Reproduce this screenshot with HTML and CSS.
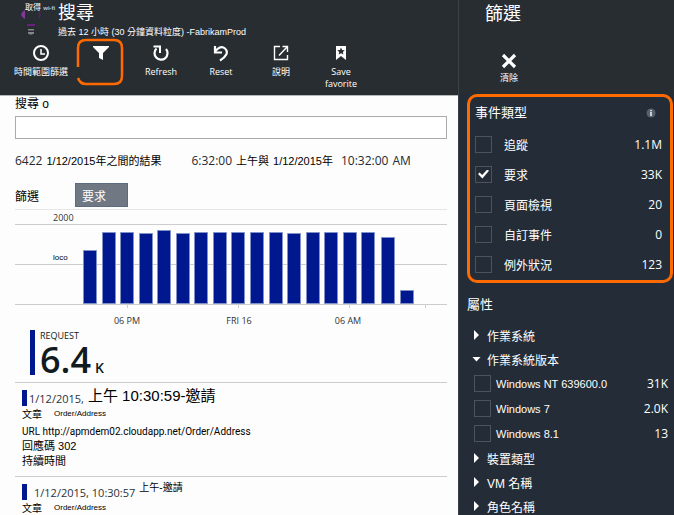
FILE: index.html
```html
<!DOCTYPE html>
<html lang="zh-Hant">
<head>
<meta charset="utf-8">
<title>搜尋</title>
<link rel="stylesheet" href="styles.css">
</head>
<body>
<div class="app">
  <main class="search">
    <header class="search-head">
      <div class="brand">
        <div class="logo">
          <svg class="bulb" width="22" height="32" viewBox="0 0 22 32" aria-hidden="true">
            <path d="M5 7C0 10 0 13 5 16Z" fill="#803998"/>
            <path d="M19 9Q21 12 19 15" stroke="#4b2563" stroke-width="1.500" fill="none"/>
            <path d="M7 21h8v2H7z" fill="#68217a"/>
            <path d="M8 26h6v1.500H8zM8 29h6v1.500l-2 1h-2l-2-1z" fill="#85888a"/>
          </svg>
          <span class="logo-text">取得 <b>wi-fi</b></span>
        </div>
        <div class="heading">
          <h1>搜尋</h1>
          <p>過去 12 小時 (30 分鐘資料粒度) -FabrikamProd</p>
        </div>
      </div>
      <nav class="toolbar">
        <button type="button">
          <svg width="18" height="18" viewBox="0 0 18 18" aria-hidden="true"><circle cx="9" cy="9" r="7" fill="none" stroke="#fff" stroke-width="2"/><path d="M9 5v5h4" fill="none" stroke="#fff" stroke-width="1.500"/></svg>
          <span>時間範圍篩選</span>
        </button>
        <button type="button" class="picked" aria-label="篩選">
          <svg width="18" height="18" viewBox="0 0 18 18" aria-hidden="true"><path d="M1 2h16v1l-6 6v7l-4-2V9L1 3z" fill="#fff"/></svg>
          <svg class="outline" width="48" height="48" viewBox="0 0 48 48" aria-hidden="true"><path d="M2 29V10Q2 2 10 2H38Q46 2 46 10V38Q46 46 38 46H10Q4 46 2 40" fill="none" stroke="#ff6a00" stroke-width="2.500"/></svg>
        </button>
        <button type="button">
          <svg width="18" height="18" viewBox="0 0 18 18" aria-hidden="true"><path d="M4.500 4.500A6.500 6.500 0 1 0 14 5" fill="none" stroke="#fff" stroke-width="2.200"/><path d="M1.500 2.500H8V9" fill="none" stroke="#fff" stroke-width="2"/></svg>
          <span>Refresh</span>
        </button>
        <button type="button">
          <svg width="18" height="18" viewBox="0 0 18 18" aria-hidden="true"><path d="M3 7.500C6 4 10 2 13 4.500C17 8 14 13 8 16.500" fill="none" stroke="#fff" stroke-width="2.200"/><path d="M3 2v6.500h7" fill="none" stroke="#fff" stroke-width="2.200"/></svg>
          <span>Reset</span>
        </button>
        <button type="button">
          <svg width="18" height="18" viewBox="0 0 18 18" aria-hidden="true"><path d="M8 2.500H2.500v13h13V11M7 11.500L15 3M10.500 2.500h5V8" fill="none" stroke="#fff" stroke-width="1.400"/></svg>
          <span>說明</span>
        </button>
        <button type="button">
          <svg width="18" height="18" viewBox="0 0 18 18" aria-hidden="true"><path d="M4 2h10v14l-5-4-5 4z" fill="#fff"/><path d="M9 3.500l1.100 2.500 2.700.2-2 1.800.6 2.600L9 9.200l-2.400 1.400.6-2.600-2-1.800 2.700-.2z" fill="#282d31"/></svg>
          <span>Save<br>favorite</span>
        </button>
      </nav>
    </header>

    <section class="content">
      <label class="query" for="q">搜尋 o</label>
      <input class="query-box" id="q" type="text">
      <p class="range">
        <span class="seg big">6422</span>
        <span class="seg span-from">1/12/2015年之間的結果</span>
        <span class="seg big">6:32:00</span>
        <span class="seg">上午與</span>
        <span class="seg span-to">1/12/2015年</span>
        <span class="seg big">10:32:00</span>
        <span class="seg big">AM</span>
      </p>
      <div class="filters">
        <span>篩選</span>
        <button type="button" class="chip">要求</button>
      </div>
      <svg class="chart" viewBox="0 0 432 120" role="img" aria-label="REQUEST">
        <g fill="none" stroke="#ccc">
          <path stroke="#e6e6e6" d="M0 .5H432"/>
          <path d="M0 15.500H432M0 55.500H432M0 95.500H432M112.500 95v4M223.500 95v4M334.500 95v4M410.500 95v4"/>
        </g>
        <g class="bars">
          <path d="M68.500 41.500h13v53h-13zM87.500 23.500h13v71h-13zM105.500 23.500h13v71h-13zM124.500 24.500h13v70h-13zM142.500 21.500h13v73h-13zM161.500 24.500h13v70h-13zM179.500 23.500h13v71h-13zM198.500 23.500h13v71h-13zM216.500 23.500h13v71h-13zM235.500 23.500h13v71h-13zM254.500 23.500h13v71h-13zM272.500 24.500h13v70h-13zM291.500 23.500h13v71h-13zM309.500 23.500h13v71h-13zM328.500 23.500h13v71h-13zM346.500 23.500h13v71h-13zM366.500 28.500h13v66h-13zM385.500 81.500h13v13h-13z"/>
        </g>
        <g class="axis">
          <text x="38" y="12">2000</text>
          <text class="mid-value" x="38" y="51">loco</text>
          <g text-anchor="middle">
            <text x="112" y="115">06 PM</text>
            <text x="224" y="115">FRI 16</text>
            <text x="333" y="115">06 AM</text>
          </g>
        </g>
      </svg>
      <div class="total">
        <span class="total-name">REQUEST</span>
        <span class="total-value"><span>6.4</span><small>K</small></span>
      </div>
      <article class="hit">
        <h2><span class="date">1/12/2015,</span><span class="time">上午 10:30:59-邀請</span></h2>
        <p class="meta"><span>文章</span><span class="path">Order/Address</span></p>
        <div class="details">
          <p class="url">URL http://apmdem02.cloudapp.net/Order/Address</p>
          <p>回應碼 302</p>
          <p>持續時間</p>
        </div>
      </article>
      <article class="hit compact">
        <h2><span class="date">1/12/2015, 10:30:57</span><span class="time">上午-邀請</span></h2>
        <p class="meta"><span>文章</span><span class="path">Order/Address</span></p>
      </article>
    </section>
  </main>

  <aside class="panel">
    <header class="panel-head">
      <h1>篩選</h1>
      <button type="button" class="clear">
        <svg width="16" height="16" viewBox="0 0 16 16" aria-hidden="true"><path d="M2 2l12 12M14 2L2 14" stroke="#fff" stroke-width="3.200"/></svg>
        <span>清除</span>
      </button>
    </header>
    <section class="types">
      <div class="types-head">
        <h2>事件類型</h2>
        <svg width="10" height="10" viewBox="0 0 10 10" aria-hidden="true"><circle cx="5" cy="5" r="4.500" fill="#56616d"/><path d="M4.300 2h1.400v1.300H4.300zM4.300 4h1.400v4H4.300z" fill="#fff"/></svg>
      </div>
      <label class="option"><input type="checkbox"><span>追蹤</span><b>1.1M</b></label>
      <label class="option"><input type="checkbox" checked><span>要求</span><b>33K</b></label>
      <label class="option"><input type="checkbox"><span>頁面檢視</span><b>20</b></label>
      <label class="option"><input type="checkbox"><span>自訂事件</span><b>0</b></label>
      <label class="option"><input type="checkbox"><span>例外狀況</span><b>123</b></label>
    </section>
    <section class="props">
      <h2>屬性</h2>
      <button type="button" class="group">作業系統</button>
      <button type="button" class="group open">作業系統版本</button>
      <label class="option"><input type="checkbox"><span>Windows NT 639600.0</span><b>31K</b></label>
      <label class="option"><input type="checkbox"><span>Windows 7</span><b>2.0K</b></label>
      <label class="option"><input type="checkbox"><span>Windows 8.1</span><b>13</b></label>
      <button type="button" class="group">裝置類型</button>
      <button type="button" class="group">VM 名稱</button>
      <button type="button" class="group">角色名稱</button>
    </section>
  </aside>
</div>
</body>
</html>
```
FILE: styles.css
```css
* {
  box-sizing: border-box;
}

body {
  margin: 0;
  background: #242d37;
  color: #000;
  font-family: "Liberation Sans", "Noto Sans CJK TC", sans-serif;
  font-size: 12px;
}

h1, h2, p {
  margin: 0;
  font-weight: 400;
}

button {
  padding: 0;
  border: 0;
  background: none;
  color: inherit;
  font: inherit;
}

svg {
  display: block;
}

.app {
  display: grid;
  grid-template-columns: minmax(0, 1fr) 216px;
  height: 100vh;
  overflow: hidden;
}

/* Search column */

.search {
  background: #fdfdfd;
}

.search-head {
  height: 96px;
  background: #282d31;
  border-bottom: 1px solid #b5b7b9;
  color: #fff;
}

.brand {
  display: flex;
  height: 40px;
}

.logo {
  position: relative;
  width: 58px;
  padding: 3px 0 0 20px;
}

.logo-text {
  position: absolute;
  top: 3px;
  left: 25px;
  font-size: 8px;
  line-height: 10px;
  white-space: nowrap;
}

.logo-text b {
  color: #b9c6d8;
  font-size: 6px;
}

.heading h1 {
  height: 26px;
  font-size: 18px;
  line-height: 26px;
}

.heading p {
  font-size: 9px;
  line-height: 12px;
  white-space: nowrap;
}

.toolbar {
  display: grid;
  grid-template-columns: repeat(6, 60px);
  padding: 4px 0 0 11px;
}

.toolbar button {
  position: relative;
  display: flex;
  flex-direction: column;
  align-items: center;
  gap: 4px;
  font-family: "Open Sans", "Noto Sans CJK TC", sans-serif;
  font-size: 9px;
  line-height: 12px;
}

.toolbar .outline {
  position: absolute;
  top: -6px;
  left: 5px;
}

.content {
  padding: 0 11px 0 15px;
}

.query {
  display: block;
  line-height: 16px;
}

.query-box {
  display: block;
  width: 100%;
  height: 23px;
  margin-top: 4px;
  border: 1px solid #a9abad;
  background: #fff;
}

.range {
  display: flex;
  align-items: center;
  height: 42px;
  font-size: 11px;
  white-space: nowrap;
}

.seg {
  margin-right: 4px;
}

.seg.big {
  color: #222b33;
  font-family: "Open Sans", sans-serif;
  font-size: 12px;
}

.seg.span-from {
  margin-right: 30px;
}

.seg.span-to {
  margin-right: 8px;
}

.filters {
  display: flex;
  align-items: center;
  gap: 36px;
  height: 28px;
}

.chip {
  width: 53px;
  height: 24px;
  padding-left: 6px;
  background: #6f7883;
  border: 1px solid #5d6b7e;
  color: #fff;
  text-align: left;
}

.chart {
  width: 100%;
}

.bars {
  fill: #00188f;
  stroke: #8290c8;
}

.axis {
  fill: #333;
  font-family: "Open Sans", sans-serif;
  font-size: 9px;
}

.axis .mid-value {
  fill: #000;
  font-family: "Liberation Sans", sans-serif;
  font-size: 8px;
}

.total {
  display: flex;
  flex-direction: column;
  height: 45px;
  margin: 1px 0 7px 15px;
  padding-left: 5px;
  border-left: 5px solid #00188f;
  color: #101a20;
  font-family: "Open Sans", sans-serif;
}

.total-name {
  font-size: 9px;
  line-height: 11px;
}

.total-value {
  display: flex;
  align-items: baseline;
  gap: 4px;
  font-size: 36px;
  font-weight: 600;
  line-height: 38px;
}

.total-value small {
  font-size: 14px;
}

.hit {
  height: 94px;
  padding: 7px 0 0 7px;
  border-top: 1px solid #ccc;
}

.hit h2 {
  display: flex;
  align-items: center;
  gap: 4px;
  height: 16px;
  padding-left: 2px;
  border-left: 5px solid #00188f;
  white-space: nowrap;
}

.hit .date {
  color: #29323a;
  font-family: "Open Sans", sans-serif;
  font-size: 11px;
}

.hit .time {
  font-size: 15px;
  line-height: 16px;
  align-self: flex-start;
  margin-top: -2px;
}

.hit.compact h2 {
  padding-left: 7px;
}

.hit.compact .time {
  font-size: 10px;
  line-height: 12px;
}

.meta {
  display: flex;
  align-items: center;
  gap: 12px;
  height: 14px;
  font-size: 10px;
}

.path {
  font-size: 8px;
}

.details {
  padding-top: 4px;
  font-size: 11px;
  line-height: 15px;
}

.details .url {
  font-family: Roboto, sans-serif;
  font-size: 10px;
}

/* Filter panel */

.panel {
  background: #242d37;
  border-left: 1px solid #3a4249;
  color: #fff;
}

.panel-head {
  height: 94px;
  padding-left: 26px;
  background: #282d31;
}

.panel-head h1 {
  height: 53px;
  font-size: 18px;
  line-height: 28px;
}

.clear {
  display: flex;
  flex-direction: column;
  align-items: center;
  gap: 3px;
  width: 48px;
  font-size: 9px;
  line-height: 12px;
}

.types {
  margin: 0 1px 0 8px;
  height: 189px;
  padding: 0 8px 0 5px;
  border: 3px solid #ff6a00;
  border-radius: 10px;
}

.types-head {
  display: flex;
  align-items: center;
  justify-content: space-between;
  height: 32px;
  padding-right: 6px;
}

.types h2, .props h2 {
  font-size: 13px;
  line-height: 30px;
}

.option {
  display: flex;
  align-items: center;
  height: 30px;
}

.option input {
  display: grid;
  place-items: center;
  flex: none;
  width: 17px;
  height: 17px;
  margin: 0 12px 0 0;
  border: 1px solid #4b545d;
  appearance: none;
}

.option input:checked::before {
  content: "";
  width: 11px;
  height: 9px;
  background: #fff;
  clip-path: polygon(0 50%, 15% 34%, 38% 62%, 84% 0, 100% 14%, 40% 100%);
}

.option b {
  margin-left: auto;
  font-family: "Open Sans", sans-serif;
  font-size: 12px;
  font-weight: 500;
}

.props {
  padding: 7px 6px 0 8px;
}

.props h2 {
  margin-bottom: 3px;
}

.props .option {
  height: 25px;
  padding-left: 7px;
  font-size: 11px;
}

.props .option input {
  margin-right: 5px;
}

.group {
  display: flex;
  align-items: center;
  width: 100%;
  height: 24px;
  padding-left: 7px;
}

.group::before {
  content: "";
  width: 5px;
  height: 10px;
  margin-right: 8px;
  background: #fff;
  clip-path: polygon(0 0, 100% 50%, 0 100%);
}

.group.open::before {
  width: 9px;
  height: 5px;
  margin: 0 6px 0 -2px;
  clip-path: polygon(0 0, 100% 0, 50% 100%);
}
```
